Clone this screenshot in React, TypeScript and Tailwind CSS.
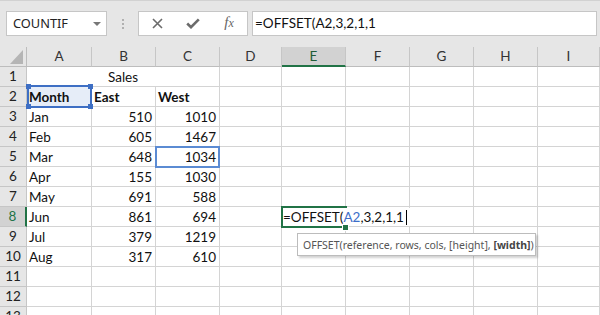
import React from 'react';

const COLS = ['A', 'B', 'C', 'D', 'E', 'F', 'G', 'H', 'I'];

const cellBase =
  "relative border-r border-b border-[#d4d4d4] flex items-end whitespace-nowrap text-[13.5px] leading-[18px] text-[#111]";

function RowHeader({ n, active }: { n: number; active?: boolean }) {
  return active ? (
    <div className="flex items-center justify-center bg-[#d2d2d2] border-b border-[#c6c6c6] border-r-2 border-r-[#217346] text-[#217346] text-[13.5px]">
      {n}
    </div>
  ) : (
    <div className="flex items-center justify-center bg-[#e6e6e6] border-b border-r border-[#c6c6c6] text-[#222] text-[13.5px]">
      {n}
    </div>
  );
}

function L({ children, bold }: { children?: React.ReactNode; bold?: boolean }) {
  return <div className={cellBase + " pl-[2px]" + (bold ? " font-bold" : "")}>{children}</div>;
}
function R({ children }: { children?: React.ReactNode }) {
  return <div className={cellBase + " justify-end pr-[3px]"}>{children}</div>;
}
function E() {
  return <div className={cellBase} />;
}

const data: [number, string, string, string][] = [
  [3, 'Jan', '510', '1010'],
  [4, 'Feb', '605', '1467'],
  [5, 'Mar', '648', '1034'],
  [6, 'Apr', '155', '1030'],
  [7, 'May', '691', '588'],
  [8, 'Jun', '861', '694'],
  [9, 'Jul', '379', '1219'],
  [10, 'Aug', '317', '610'],
];

function ActiveCell() {
  return (
    <div className={cellBase}>
      <div className="absolute left-[-1px] top-[-1px] w-[66px] h-[22px] border-2 border-r-0 border-[#217346] z-10" />
      <div className="absolute left-[1px] top-[1px] h-[18px] bg-white pr-[3px] z-20 flex items-end text-[13.5px] leading-[18px] text-[#111]">
        <span>=OFFSET(</span>
        <span className="text-[#3d6fc9]">A2</span>
        <span>,3,2,1,1</span>
        <span className="inline-block w-px h-[15px] bg-black ml-[2px] mb-[1px]" />
      </div>
      <div className="absolute left-[60px] top-[17px] w-[7px] h-[7px] bg-[#217346] border border-white z-20" />
      <div className="absolute left-[15px] top-[26px] w-[239px] h-[23px] bg-white border border-[#bcbcbc] shadow-[2px_2px_2px_rgba(0,0,0,0.18)] z-30 flex items-center pl-[5px] font-['Noto_Sans',sans-serif] text-[10.5px] text-[#555]">
        OFFSET(reference, rows, cols, [height],&nbsp;<span className="font-bold text-[#444]">[width]</span>)
      </div>
    </div>
  );
}

export default function App() {
  return (
    <div className="w-[600px] h-[315px] overflow-hidden bg-white font-['Lato',sans-serif]">
      {/* Top bar */}
      <div className="h-[47px] bg-[#e6e6e6] border-t border-[#d2d2d2] flex items-start pt-[10px] pl-[6px]">
        <div className="w-[101px] h-[25px] bg-white border border-[#c6c6c6] flex items-center justify-between pl-[6px] pr-[5px]">
          <span className="font-['Noto_Sans',sans-serif] text-[12.8px] text-[#222] leading-none">COUNTIF</span>
          <svg width="8" height="4" viewBox="0 0 8 4">
            <polygon points="0,0 8,0 4,4" fill="#777" />
          </svg>
        </div>
        <div className="w-[31px] h-[25px] flex flex-col items-center justify-center gap-[2px]">
          <div className="w-[2px] h-[2px] bg-[#b0b0b0]" />
          <div className="w-[2px] h-[2px] bg-[#b0b0b0]" />
          <div className="w-[2px] h-[2px] bg-[#b0b0b0]" />
        </div>
        <div className="w-[110px] h-[25px] bg-white border border-[#c6c6c6] flex items-center">
          <div className="w-[36px] h-full flex items-center justify-center">
            <svg width="11" height="11" viewBox="0 0 11 11">
              <path d="M1 1 L10 10 M10 1 L1 10" stroke="#6b6b6b" strokeWidth="1.6" fill="none" />
            </svg>
          </div>
          <div className="w-[36px] h-full flex items-center justify-center">
            <svg width="14" height="11" viewBox="0 0 14 11">
              <path d="M1.2 5.5 L5 9.2 L12.8 1.3" stroke="#6b6b6b" strokeWidth="2.6" fill="none" />
            </svg>
          </div>
          <div className="w-[36px] h-full flex items-center justify-center">
            <span className="font-['Liberation_Serif',serif] italic text-[15px] text-[#666] leading-none mb-[2px]">
              f<span className="text-[12px]">x</span>
            </span>
          </div>
        </div>
        <div className="flex-1 ml-[4px] mr-[3px] h-[25px] bg-white border border-[#c6c6c6] flex items-center pl-[2px] text-[13.5px] text-[#111]">
          =OFFSET(A2,3,2,1,1
        </div>
      </div>

      {/* Grid */}
      <div className="grid grid-cols-[27px_65px_64px_64px_62px_64px_64px_64px_64px_1fr] auto-rows-[20px]">
        {/* Column header row */}
        <div className="bg-[#e6e6e6] border-r border-b border-[#bdbdbd] flex items-end justify-end pr-[3px] pb-[2px]">
          <svg width="13" height="14" viewBox="0 0 13 14">
            <polygon points="13,0 13,14 0,14" fill="#b5b5b5" />
          </svg>
        </div>
        {COLS.map((c) =>
          c === 'E' ? (
            <div
              key={c}
              className="bg-[#d2d2d2] border-r border-[#c6c6c6] border-b-2 border-b-[#217346] flex items-center justify-center text-[13.5px] text-[#1f5c38]"
            >
              {c}
            </div>
          ) : (
            <div
              key={c}
              className="bg-[#e6e6e6] border-r border-b border-[#c6c6c6] border-b-[#bdbdbd] flex items-center justify-center text-[13.5px] text-[#333]"
            >
              {c}
            </div>
          )
        )}

        {/* Row 1 */}
        <RowHeader n={1} />
        <div className={cellBase + " col-span-3 justify-center"}>Sales</div>
        <E /><E /><E /><E /><E /><E />

        {/* Row 2 */}
        <RowHeader n={2} />
        <div className={cellBase + " pl-[2px] font-bold bg-[#e6edf8]"}>
          <div className="absolute left-0 top-[-2px] w-[65px] h-[23px] border-2 border-[#3e6fc4] z-10" />
          <div className="absolute left-[-1px] top-[-3px] w-[5px] h-[5px] bg-[#3e6fc4] z-10" />
          <div className="absolute left-[61px] top-[-3px] w-[5px] h-[5px] bg-[#3e6fc4] z-10" />
          <div className="absolute left-[-1px] top-[17px] w-[5px] h-[5px] bg-[#3e6fc4] z-10" />
          <div className="absolute left-[61px] top-[17px] w-[5px] h-[5px] bg-[#3e6fc4] z-10" />
          Month
        </div>
        <L bold>East</L>
        <L bold>West</L>
        <E /><E /><E /><E /><E /><E />

        {data.map(([n, m, b, c]) => (
          <React.Fragment key={n}>
            <RowHeader n={n} active={n === 8} />
            <L>{m}</L>
            <R>{b}</R>
            {n === 5 ? (
              <div className={cellBase + " justify-end pr-[3px]"}>
                <div className="absolute left-[-1px] top-[-1px] w-[65px] h-[22px] border-2 border-[#5b8bd3] z-10" />
                {c}
              </div>
            ) : (
              <R>{c}</R>
            )}
            <E />
            {n === 8 ? <ActiveCell /> : <E />}
            <E /><E /><E /><E />
          </React.Fragment>
        ))}

        {[11, 12, 13].map((n) => (
          <React.Fragment key={n}>
            <RowHeader n={n} />
            <E /><E /><E /><E /><E /><E /><E /><E /><E />
          </React.Fragment>
        ))}
      </div>
    </div>
  );
}
